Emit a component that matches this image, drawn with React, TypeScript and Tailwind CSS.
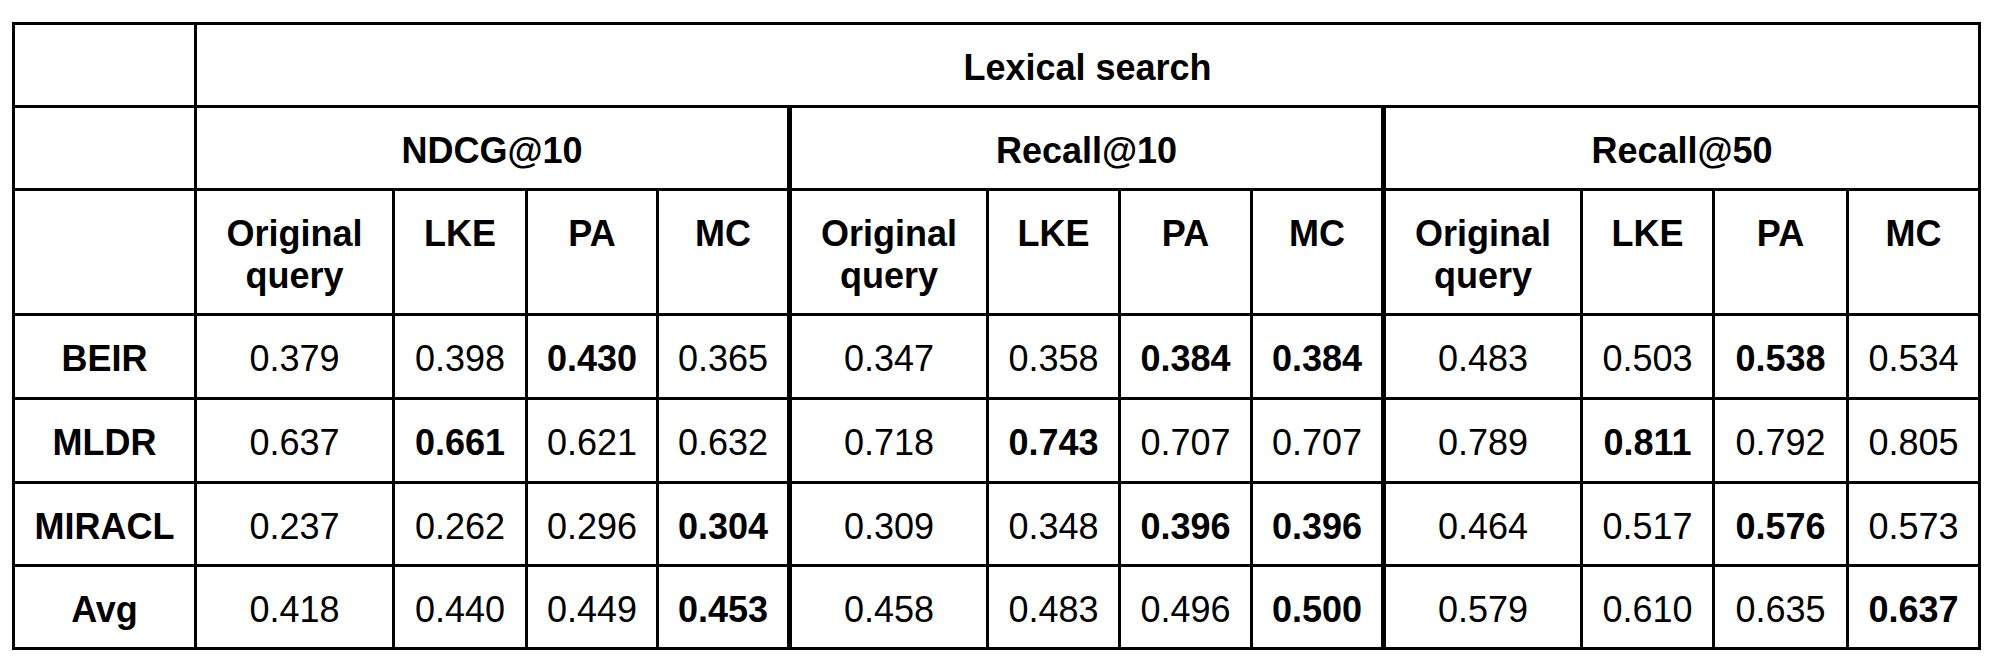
import React from "react";

type Cell = { v: string; b?: boolean };

const rows: { label: string; cells: Cell[] }[] = [
  {
    label: "BEIR",
    cells: [
      { v: "0.379" }, { v: "0.398" }, { v: "0.430", b: true }, { v: "0.365" },
      { v: "0.347" }, { v: "0.358" }, { v: "0.384", b: true }, { v: "0.384", b: true },
      { v: "0.483" }, { v: "0.503" }, { v: "0.538", b: true }, { v: "0.534" },
    ],
  },
  {
    label: "MLDR",
    cells: [
      { v: "0.637" }, { v: "0.661", b: true }, { v: "0.621" }, { v: "0.632" },
      { v: "0.718" }, { v: "0.743", b: true }, { v: "0.707" }, { v: "0.707" },
      { v: "0.789" }, { v: "0.811", b: true }, { v: "0.792" }, { v: "0.805" },
    ],
  },
  {
    label: "MIRACL",
    cells: [
      { v: "0.237" }, { v: "0.262" }, { v: "0.296" }, { v: "0.304", b: true },
      { v: "0.309" }, { v: "0.348" }, { v: "0.396", b: true }, { v: "0.396", b: true },
      { v: "0.464" }, { v: "0.517" }, { v: "0.576", b: true }, { v: "0.573" },
    ],
  },
  {
    label: "Avg",
    cells: [
      { v: "0.418" }, { v: "0.440" }, { v: "0.449" }, { v: "0.453", b: true },
      { v: "0.458" }, { v: "0.483" }, { v: "0.496" }, { v: "0.500", b: true },
      { v: "0.579" }, { v: "0.610" }, { v: "0.635" }, { v: "0.637", b: true },
    ],
  },
];

const subHeads = ["LKE", "PA", "MC"];

function leftBorder(colIndex: number) {
  return colIndex === 4 || colIndex === 8 ? "border-l-[5px]" : "border-l-[3px]";
}

export default function App() {
  const base = "border-t-[3px] border-black flex justify-center text-center";
  const mid = "items-center pt-[5px]";
  return (
    <div
      className="w-[2002px] h-[670px] bg-white text-black pt-[22px] pl-[12px]"
      style={{ fontFamily: '"Liberation Sans", Arial, sans-serif' }}
    >
      <div className="grid w-max border-r-[3px] border-b-[3px] border-black text-[36px] leading-[42px] grid-cols-[182px_198px_133px_131px_131px_199px_132px_132px_131px_199px_132px_134px_132px] grid-rows-[83px_83px_125px_84px_84px_83px_83px]">
        {/* Row 0 */}
        <div className={`${base} border-l-[3px]`} />
        <div className={`${base} border-l-[3px] col-span-12 ${mid} font-bold`}>
          Lexical search
        </div>

        {/* Row 1 */}
        <div className={`${base} border-l-[3px]`} />
        <div className={`${base} border-l-[3px] col-span-4 ${mid} font-bold`}>NDCG@10</div>
        <div className={`${base} border-l-[5px] col-span-4 ${mid} font-bold`}>Recall@10</div>
        <div className={`${base} border-l-[5px] col-span-4 ${mid} font-bold`}>Recall@50</div>

        {/* Row 2 */}
        <div className={`${base} border-l-[3px]`} />
        {[0, 1, 2].map((g) => (
          <React.Fragment key={g}>
            <div className={`${base} ${leftBorder(g * 4)} items-start pt-[22px] font-bold`}>
              <span>
                Original
                <br />
                query
              </span>
            </div>
            {subHeads.map((h, i) => (
              <div
                key={h}
                className={`${base} ${leftBorder(g * 4 + i + 1)} items-start pt-[22px] font-bold`}
              >
                {h}
              </div>
            ))}
          </React.Fragment>
        ))}

        {/* Data rows */}
        {rows.map((r) => (
          <React.Fragment key={r.label}>
            <div className={`${base} border-l-[3px] ${mid} font-bold`}>{r.label}</div>
            {r.cells.map((c, i) => (
              <div
                key={i}
                className={`${base} ${leftBorder(i)} ${mid} ${c.b ? "font-bold" : "font-normal"}`}
              >
                {c.v}
              </div>
            ))}
          </React.Fragment>
        ))}
      </div>
    </div>
  );
}
